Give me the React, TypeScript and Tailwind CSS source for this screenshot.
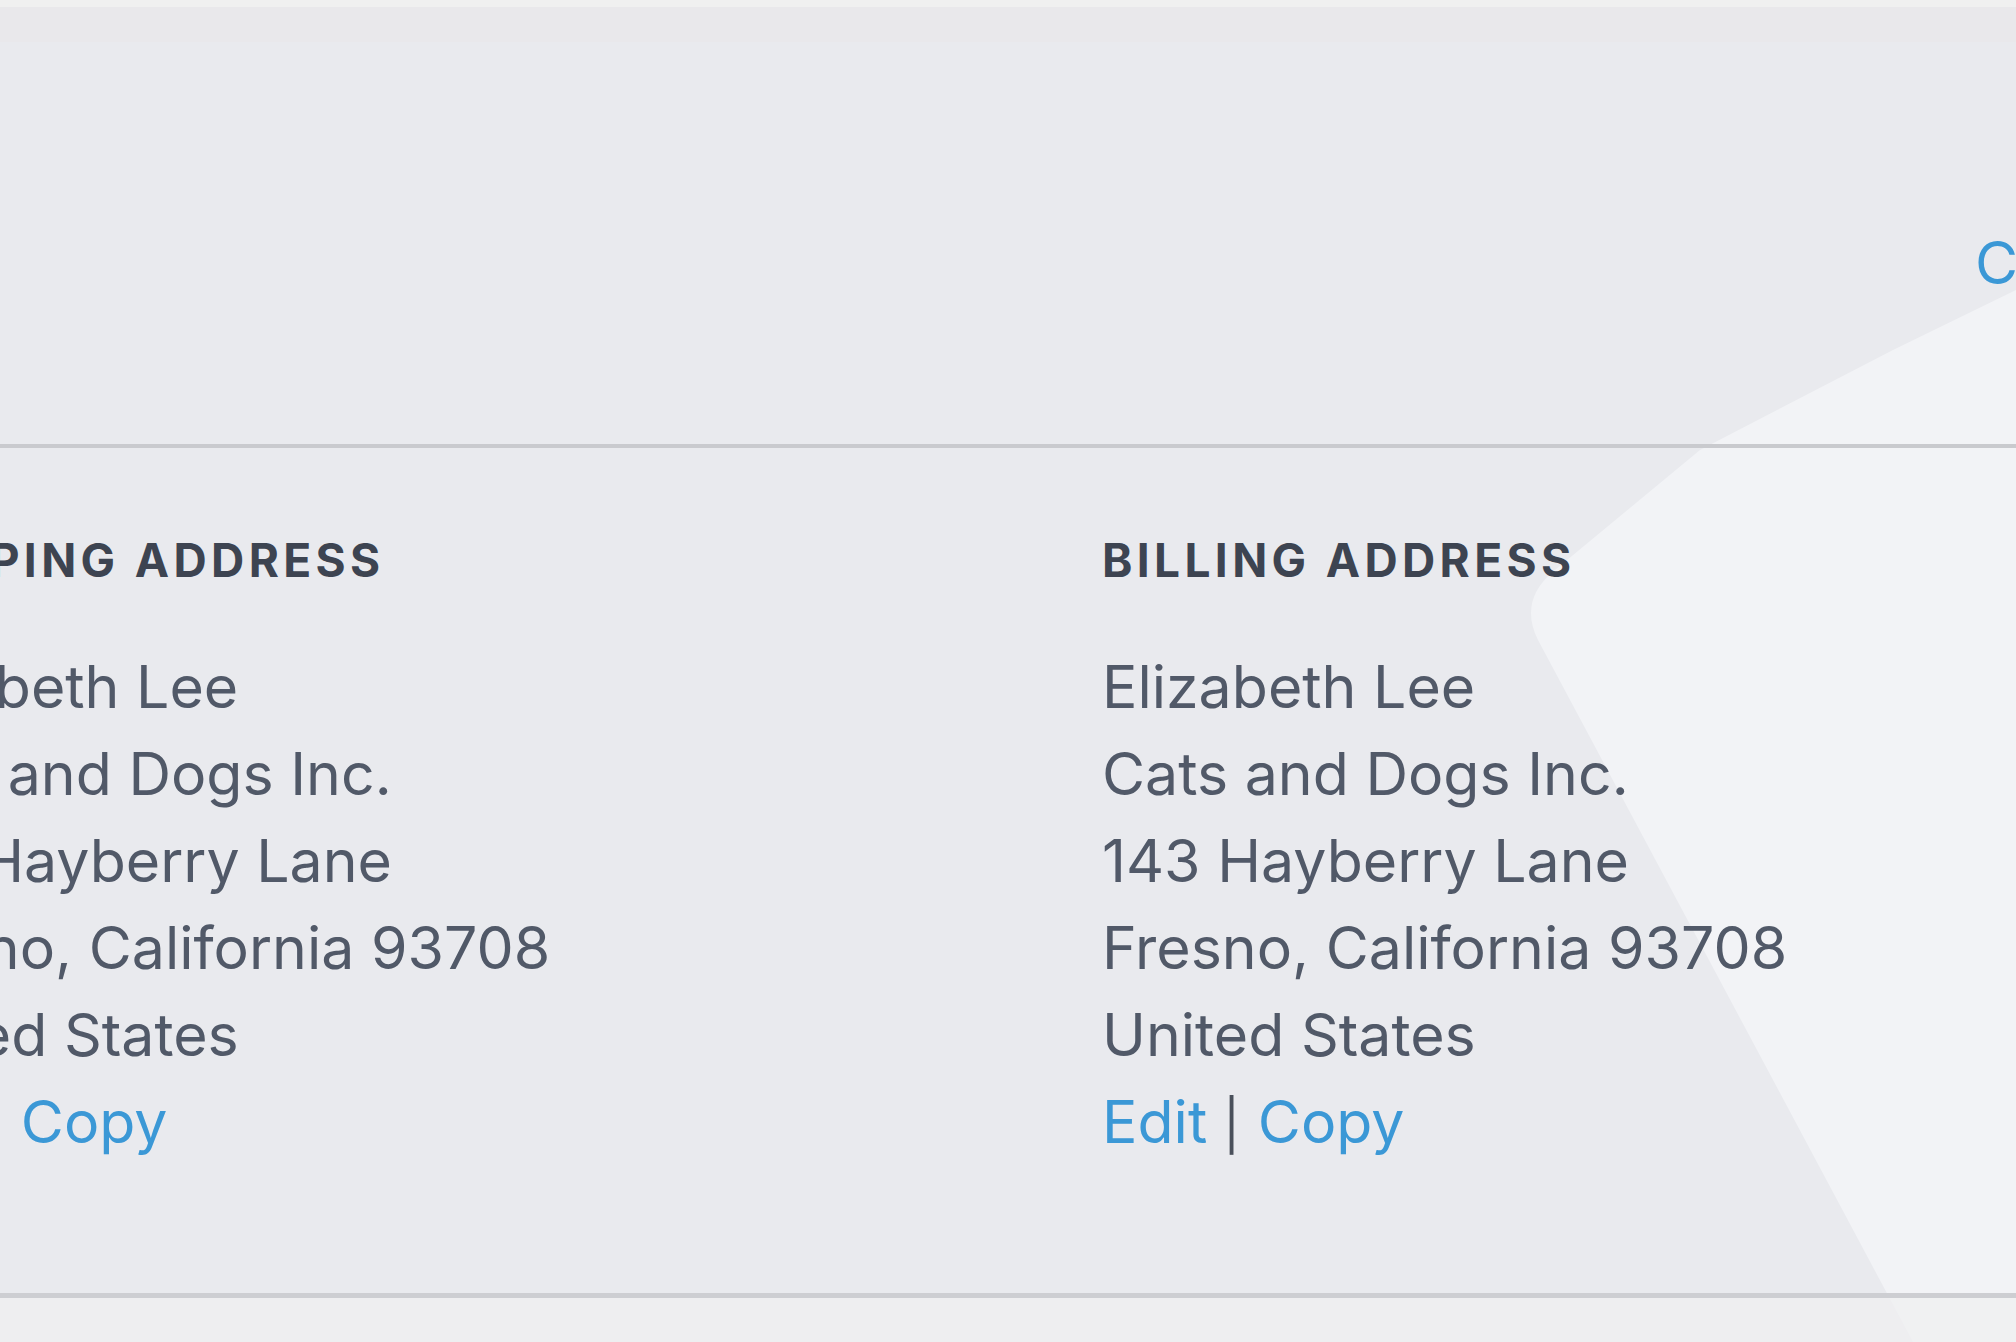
import React from "react";

function AddressColumn({ title, first }: { title: string; first?: boolean }) {
  return (
    <div className={first ? "w-[1237px] shrink-0" : "shrink-0"}>
      <div className="text-[46px] leading-[67px] font-bold uppercase tracking-[0.095em] text-[#3d4451] whitespace-nowrap">
        {title}
      </div>
      <div className="mt-[49px] text-[59px] leading-[87px] text-[#515968] whitespace-nowrap">
        <div>Elizabeth Lee</div>
        <div>Cats and Dogs Inc.</div>
        <div>143 Hayberry Lane</div>
        <div>Fresno, California 93708</div>
        <div>United States</div>
        <div className="flex items-baseline">
          <span className="text-[#3b98d6]">Edit</span>
          <span className="ml-[16px] mr-[18px] text-[50px] text-[#4a505b]">|</span>
          <span className="text-[#3b98d6]">Copy</span>
        </div>
      </div>
    </div>
  );
}

export default function App() {
  return (
    <div
      className="relative w-[2016px] h-[1342px] overflow-hidden bg-[#e9eaee]"
      style={{ fontFamily: "Inter, 'Noto Sans', 'Liberation Sans', sans-serif" }}
    >
      <svg
        className="absolute inset-0 pointer-events-none"
        width="2016"
        height="1342"
        viewBox="0 0 2016 1342"
      >
        <path
          d="M2016 290 L1893 350 L1700 450 L1555 570 Q1518 600 1538 640 L1913 1342 L2016 1342 Z"
          fill="#f2f3f6"
        />
      </svg>
      <div className="relative flex flex-col h-full">
        <div className="h-[7px] bg-[#f0f0f0]" />
        <div className="h-[35px] bg-[#e9e8eb]" />
        <div className="h-[402px] pt-[177px] pl-[1975px]">
          <div className="text-[59px] leading-[87px] text-[#3b98d6] whitespace-nowrap">
            Change
          </div>
        </div>
        <div className="h-[4px] bg-[#c9cace]" />
        <div className="flex ml-[-135px] pt-[79px] h-[845px]">
          <AddressColumn title="Shipping Address" first />
          <AddressColumn title="Billing Address" />
        </div>
        <div className="h-[5px] bg-[#cdced2]" />
        <div className="flex-1 bg-[#efeff1]/70" />
      </div>
    </div>
  );
}
